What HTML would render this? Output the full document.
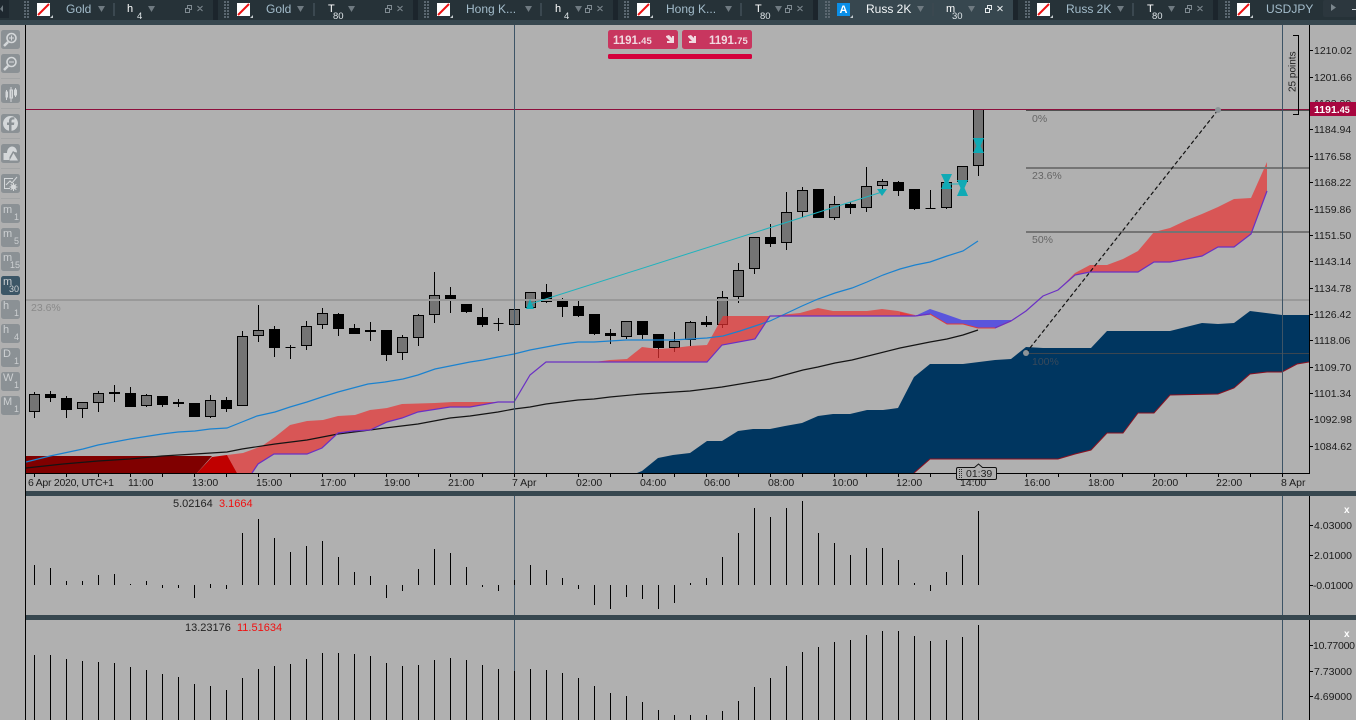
<!DOCTYPE html>
<html><head><meta charset="utf-8"><title>Chart</title>
<style>
html,body{margin:0;padding:0;background:#b0b0b0;width:1356px;height:720px;overflow:hidden}
svg{display:block;position:absolute;left:0;top:0}
text{font-family:"Liberation Sans",sans-serif;font-size:10.5px}
.ax text{fill:#1c1c1c}
.tt{fill:#a3bccb;font-size:12px}
.tf{fill:#fff;font-size:11px}
.ts{fill:#dfe5e8;font-size:9.5px}
.sb{fill:#cdd0d2;font-size:11px}
.ss{fill:#cdd0d2;font-size:9px}
.fb{fill:#8a8a8a;font-size:10.5px}
.lb{font-size:11px}
</style></head><body>
<svg width="1356" height="720" viewBox="0 0 1356 720" xmlns="http://www.w3.org/2000/svg">
<rect width="1356" height="720" fill="#b0b0b0"/>

<!-- clouds: navy -->
<path fill="#003660" d="M637 473L642 471L658 458L673 455L690 453L707 441L722 441L738 431L753 429L770 429L785 426L802 423L818 416L833 414L850 414L867 410L883 410L898 408L914 377L930 364L963 364L995 360L1011 359L1026 347L1043 348L1091 348L1107 331L1170 331L1202 323L1218 324L1234 323L1250 311L1282 315L1309 315V362L1297 364L1282 372L1267 372L1250 374L1234 388L1218 394L1170 395L1154 413L1138 413L1123 433L1107 433L1091 450L1075 454L1058 459L930 459L914 473Z"/>
<path fill="none" stroke="#8a1020" d="M914 473L930 459L1058 459L1075 454L1091 450L1107 433L1123 433L1138 413L1154 413L1170 395L1218 394L1234 388L1250 374L1267 372L1282 372L1297 364L1309 362"/>

<!-- dark red -->
<path fill="#800000" d="M26 456H212L197 473H26Z"/>
<path fill="#c00000" d="M197 473L212 457L227 455L237 473Z"/>

<!-- candles -->
<path fill="none" stroke="#000" d="M34.5 392V418M50.5 391V402M66.5 396V418M82.5 402V418M98.5 391V412M114.5 385V402M130.5 387V406M146.5 394V407M162.5 396V407M178.5 399V407M194.5 403V417M210.5 395V418M226.5 397V412M242.5 331V406M258.5 305V342M274.5 326V357M290.5 345V359M306.5 321V350M322.5 308V329M338.5 313V336M354.5 324V334M370.5 322V341M386.5 330V361M402.5 335V360M418.5 314V346M434.5 272V323M450.5 287V313M466.5 304V313M482.5 308V327M498.5 318V331M514.5 304V325M530.5 292V308M546.5 284V303M562.5 298V317M578.5 301V317M594.5 314V335M610.5 329V344M626.5 321V339M642.5 321V339M658.5 334V358M674.5 332V352M690.5 321V346M706.5 316V327M722.5 291V328M738.5 263V303M754.5 237V274M770.5 224V247M786.5 192V250M802.5 187V217M818.5 189V218M834.5 196V220M850.5 202V214M866.5 167V212M882.5 179V189M898.5 181V196M914.5 189V210M930.5 190V208M946.5 182V209M962.5 166V182M978.5 109V176"/>
<path fill="#000" stroke="#000" d="M45.5 394.5h10v3h-10zM61.5 398.5h10v11h-10zM125.5 393.5h10v13h-10zM109.5 392.5h10v1h-10zM157.5 396.5h10v8h-10zM173.5 402.5h10v1h-10zM189.5 403.5h10v13h-10zM221.5 400.5h10v8h-10zM269.5 329.5h10v18h-10zM285.5 347.5h10v0h-10zM333.5 314.5h10v14h-10zM349.5 328.5h10v5h-10zM381.5 330.5h10v24h-10zM445.5 295.5h10v5h-10zM461.5 304.5h10v7h-10zM477.5 317.5h10v7h-10zM493.5 323.5h10v0h-10zM541.5 292.5h10v9h-10zM557.5 301.5h10v5h-10zM573.5 306.5h10v9h-10zM589.5 314.5h10v19h-10zM605.5 333.5h10v2h-10zM637.5 321.5h10v13h-10zM653.5 334.5h10v13h-10zM701.5 322.5h10v2h-10zM765.5 237.5h10v6h-10zM813.5 189.5h10v28h-10zM845.5 204.5h10v3h-10zM893.5 182.5h10v8h-10zM909.5 189.5h10v19h-10zM925.5 208.5h10v0h-10z"/>
<path fill="#747474" stroke="#000" d="M29.5 394.5h10v17h-10zM77.5 402.5h10v6h-10zM93.5 393.5h10v9h-10zM141.5 395.5h10v10h-10zM205.5 400.5h10v16h-10zM237.5 336.5h10v69h-10zM253.5 330.5h10v5h-10zM301.5 326.5h10v19h-10zM317.5 313.5h10v11h-10zM365.5 330.5h10v1h-10zM397.5 337.5h10v15h-10zM413.5 315.5h10v22h-10zM429.5 295.5h10v19h-10zM509.5 309.5h10v15h-10zM525.5 292.5h10v15h-10zM621.5 321.5h10v15h-10zM669.5 341.5h10v6h-10zM685.5 322.5h10v17h-10zM717.5 297.5h10v27h-10zM733.5 270.5h10v26h-10zM749.5 237.5h10v31h-10zM781.5 212.5h10v30h-10zM797.5 190.5h10v21h-10zM829.5 204.5h10v13h-10zM861.5 186.5h10v21h-10zM877.5 181.5h10v4h-10zM941.5 182.5h10v25h-10zM957.5 166.5h10v15h-10zM973.5 109.5h10v56h-10z"/>

<!-- red cloud with alpha over candles -->
<path fill="#ea3131" fill-opacity=".7" d="M227 455L243 453L262 446L275 437L290 425L307 421L323 420L338 416L355 415L370 410L387 408L402 404L435 403L453 402L498 402L514 402L498 402L470 407L450 407L418 412L402 418L387 422L370 430L353 431L338 433L322 448L307 454L274 454L258 464L252 473H237Z"/>
<path fill="#ea3131" fill-opacity=".7" d="M594 362L610 360L627 359L642 347L658 349L674 348L690 346L707 345L723 316L770 316L800 313L818 308L833 311L867 311L882 309L898 311L915 315L915 316L770 316L755 339L722 345L707 362Z"/>
<path fill="#ea3131" fill-opacity=".7" d="M900 312L915 316L930 314L915 316H900Z"/>
<path fill="#ea3131" fill-opacity=".7" d="M1043 296L1058 290L1075 273L1090 265L1107 265L1123 259L1138 251L1154 232L1170 228L1187 220L1202 214L1218 207L1234 199L1251 198L1267 162V191L1251 234L1234 247L1218 247L1202 256L1170 262L1154 262L1138 272L1090 272L1075 275L1058 290Z"/>
<path fill="#5a55dc" d="M915 316L930 309L945 314L962 320L1011 320V321L995 328L978 328L963 324L947 324L930 314Z"/>
<path fill="none" stroke="#e23a3a" d="M915 316L930 314L947 324L963 324L978 328L995 328L1011 321"/>

<!-- fib lines -->
<path fill="none" stroke="#999" stroke-width="2" d="M26 300H1310"/>
<path fill="none" stroke="#747474" stroke-width="2" d="M1026 168H1310M1026 232H1310"/>
<path fill="none" stroke="#3b4650" d="M1026 353.5H1310"/>
<path fill="none" stroke="#505050" stroke-width="2" d="M1026 110H1310"/>
<path fill="none" stroke="#8c0f3c" d="M26 109.5H1310"/>
<text class="fb" x="31" y="311">23.6%</text>
<g fill="#666">
<text x="1032" y="122" style="fill:#666">0%</text>
<text x="1032" y="179" style="fill:#666">23.6%</text>
<text x="1032" y="243" style="fill:#666">50%</text>
<text x="1032" y="365" style="fill:#37495a">100%</text>
</g>

<!-- indicator lines -->
<path fill="none" stroke="#1b82cf" stroke-width="1.2" d="M26 462L50 456L83 449L98 445L130 439L162 434L178 432L195 431L210 429L227 428L242 422L257 416L275 412L290 407L307 402L322 397L338 392L353 388L368 384L385 382L403 379L418 375L435 369L450 366L470 362L483 360L498 357L514 354L530 350L546 347L562 344L578 342L594 342L610 341L626 340L673 340L707 338L723 336L740 331L755 326L770 321L785 314L802 306L818 299L835 293L852 288L867 282L883 275L900 269L915 265L930 262L947 256L963 251L978 241"/>
<path fill="none" stroke="#141414" stroke-width="1.2" d="M26 468L63 464L98 461L130 459L162 456L195 454L227 452L242 449L275 444L307 440L338 434L370 430L385 428L418 424L450 418L470 416L498 412L514 409L530 407L546 404L578 400L594 399L610 397L642 394L690 391L722 387L770 379L803 370L818 367L835 363L852 360L900 348L930 342L947 339L963 335L978 330"/>
<path fill="none" stroke="#6a30c4" stroke-width="1.2" d="M252 473L258 464L274 454L307 454L322 448L338 433L353 431L370 430L387 422L402 418L418 412L450 407L470 407L498 402L514 402L530 375L546 362L707 362L722 345L755 339L770 316L915 316L930 314"/>
<path fill="none" stroke="#6a30c4" stroke-width="1.2" d="M995 328L1011 321L1026 311L1043 296L1058 290L1075 275L1090 272L1138 272L1154 262L1170 262L1202 256L1218 247L1234 247L1251 234L1267 191"/>

<!-- teal arrows -->
<path fill="none" stroke="#1fb2bd" d="M530 304L882 192M946 184H962"/>
<path fill="#10aab5" d="M530 299L534 309H526ZM882 196L877 189H887ZM973 138H984L980.500 146L984 153H973L976.500 146ZM941 174H952L948.500 181.500L952 189H941L944.500 181.500ZM957 180H968L964.500 188L968 196H957L960.500 188Z"/>

<!-- dashed trend -->
<path fill="none" stroke="#111" stroke-width="1.2" stroke-dasharray="4 2.500" d="M1026 353L1218 110"/>
<circle cx="1026" cy="353" r="3" fill="#8d9498"/>
<circle cx="1218" cy="110" r="3" fill="#8d9498"/>

<!-- vertical cursors -->
<path fill="none" stroke="#3d5466" d="M514.500 25V473M1282.500 25V473M514.500 496V615M1282.500 496V615M1282.500 620V720M514.500 620V720"/>

<!-- axes -->
<path fill="none" stroke="#000" d="M25.500 25V720M1309.500 25V473M26 473.500H1310M1309.500 496V615M1309.500 620V720"/>
<path fill="none" stroke="#000" d="M1310 50.500h3M1310 77.500h3M1310 129.500h3M1310 156.500h3M1310 182.500h3M1310 209.500h3M1310 235.500h3M1310 261.500h3M1310 288.500h3M1310 314.500h3M1310 340.500h3M1310 367.500h3M1310 393.500h3M1310 419.500h3M1310 446.500h3M1310 525.500h3M1310 555.500h3M1310 585.500h3M1310 645.500h3M1310 671.500h3M1310 696.500h3M34.500 474v3M66.500 474v3M98.500 474v3M130.500 474v3M162.500 474v3M194.500 474v3M226.500 474v3M258.500 474v3M290.500 474v3M322.500 474v3M354.500 474v3M386.500 474v3M418.500 474v3M450.500 474v3M482.500 474v3M514.500 474v3M546.500 474v3M578.500 474v3M610.500 474v3M642.500 474v3M674.500 474v3M706.500 474v3M738.500 474v3M770.500 474v3M802.500 474v3M834.500 474v3M866.500 474v3M898.500 474v3M930.500 474v3M962.500 474v3M994.500 474v3M1026.500 474v3M1058.500 474v3M1090.500 474v3M1122.500 474v3M1154.500 474v3M1186.500 474v3M1218.500 474v3M1250.500 474v3M1282.500 474v3"/>
<g class="ax">
<text x="1314" y="54">1210.02</text><text x="1314" y="81">1201.66</text><text x="1314" y="107">1193.30</text><text x="1314" y="133">1184.94</text><text x="1314" y="160">1176.58</text><text x="1314" y="186">1168.22</text><text x="1314" y="213">1159.86</text><text x="1314" y="239">1151.50</text><text x="1314" y="265">1143.14</text><text x="1314" y="292">1134.78</text><text x="1314" y="318">1126.42</text><text x="1314" y="344">1118.06</text><text x="1314" y="371">1109.70</text><text x="1314" y="397">1101.34</text><text x="1314" y="423">1092.98</text><text x="1314" y="450">1084.62</text>
<text x="1314" y="529" textLength="38">4.03000</text><text x="1314" y="559" textLength="38">2.01000</text><text x="1313" y="589" textLength="40">-0.01000</text><text x="1313" y="649" textLength="42">10.77000</text><text x="1314" y="675" textLength="38">7.73000</text><text x="1314" y="700" textLength="38">4.69000</text>
<text x="28" y="486" textLength="86">6 Apr 2020, UTC+1</text><text x="128" y="486">11:00</text><text x="192" y="486">13:00</text><text x="256" y="486">15:00</text><text x="320" y="486">17:00</text><text x="384" y="486">19:00</text><text x="448" y="486">21:00</text><text x="512" y="486">7 Apr</text><text x="576" y="486">02:00</text><text x="640" y="486">04:00</text><text x="704" y="486">06:00</text><text x="768" y="486">08:00</text><text x="832" y="486">10:00</text><text x="896" y="486">12:00</text><text x="960" y="486">14:00</text><text x="1024" y="486">16:00</text><text x="1088" y="486">18:00</text><text x="1152" y="486">20:00</text><text x="1216" y="486">22:00</text><text x="1281" y="486">8 Apr</text>
</g>

<!-- price tag -->
<rect x="1310" y="102" width="46" height="14" fill="#a8063f"/>
<text x="1314" y="113" style="fill:#fff;font-weight:bold;font-size:10.5px">1191.<tspan style="font-size:9px">45</tspan></text>

<!-- measure bracket -->
<path fill="none" stroke="#000" d="M1293 35.500H1298.500V114.500H1293"/>
<text transform="translate(1295.500 92) rotate(-90)" style="fill:#222;font-size:10px">25 points</text>

<!-- countdown -->
<path fill="#b0b0b0" stroke="#111" d="M958 467.500H974.500L978.500 464L982.500 467.500H995Q996.500 467.500 996.500 469V478Q996.500 479.500 995 479.500H958Q956.500 479.500 956.500 478V469Q956.500 467.500 958 467.500Z"/>
<path stroke="#333" stroke-dasharray="1 1" d="M959.500 469V478M961.500 469V478"/>
<text x="966" y="477" style="fill:#222;font-size:10.5px">01:39</text>

<!-- order panel -->
<rect x="608" y="30" width="70" height="19" rx="2.500" fill="#c8365f"/>
<rect x="682" y="30" width="70" height="19" rx="2.500" fill="#c8365f"/>
<rect x="608" y="54" width="144" height="5" rx="1.500" fill="#d4003c"/>
<text x="613" y="44" style="fill:#f1d9e0;font-weight:bold;font-size:11.500px">1191.<tspan style="font-size:9.500px">45</tspan></text>
<text x="709" y="44" style="fill:#f1d9e0;font-weight:bold;font-size:11.500px">1191.<tspan style="font-size:9.500px">75</tspan></text>
<path fill="#f1d9e0" d="M666 36L669 35L672 38V36H674V43H667V41H670L666 37ZM688 36L691 35L694 38V36H696V43H689V41H692L688 37Z"/>

<!-- panel dividers -->
<rect y="491" x="26" width="1330" height="5" fill="#37474f"/>
<rect y="615" x="26" width="1330" height="5" fill="#37474f"/>

<!-- histogram 1 -->
<path fill="none" stroke="#000" d="M34.500 565V585M50.500 568V585M66.500 581V585M82.500 581V585M98.500 575V585M114.500 574V585M130.500 584V585M146.500 581V585M162.500 585V588M178.500 585V588M194.500 585V598M210.500 584V588M226.500 585V589M242.500 533V585M258.500 519V585M274.500 538V585M290.500 552V585M306.500 546V585M322.500 541V585M338.500 557V585M354.500 572V585M370.500 576V585M386.500 585V598M402.500 585V591M418.500 569V585M434.500 549V585M450.500 553V585M466.500 567V585M482.500 585V587M498.500 585V591M514.500 580V585M530.500 565V585M546.500 570V585M562.500 578V585M578.500 585V589M594.500 585V605M610.500 585V609M626.500 585V597M642.500 585V599M658.500 585V609M674.500 585V603M690.500 583V585M706.500 578V585M722.500 557V585M738.500 533V585M754.500 508V585M770.500 517V585M786.500 508V585M802.500 501V585M818.500 533V585M834.500 543V585M850.500 555V585M866.500 548V585M882.500 548V585M898.500 560V585M914.500 583V585M930.500 585V591M946.500 572V585M962.500 555V585M978.500 511V585"/>
<text class="lb" x="173" y="507" style="fill:#222">5.02164</text>
<text class="lb" x="219" y="507" style="fill:#f01010">3.1664</text>
<text x="1344" y="513" style="fill:#fff;font-weight:bold;font-size:10px">x</text>

<!-- histogram 2 -->
<path fill="none" stroke="#000" d="M34.500 655V720M50.500 655V720M66.500 659V720M82.500 661V720M98.500 662V720M114.500 663V720M130.500 667V720M146.500 670V720M162.500 674V720M178.500 677V720M194.500 684V720M210.500 686V720M226.500 690V720M242.500 678V720M258.500 669V720M274.500 666V720M290.500 664V720M306.500 659V720M322.500 653V720M338.500 653V720M354.500 654V720M370.500 656V720M386.500 663V720M402.500 666V720M418.500 665V720M434.500 660V720M450.500 658V720M466.500 660V720M482.500 665V720M498.500 669V720M514.500 671V720M530.500 669V720M546.500 670V720M562.500 673V720M578.500 678V720M594.500 686V720M610.500 693V720M626.500 696V720M642.500 702V720M658.500 710V720M674.500 715V720M690.500 715V720M706.500 715V720M722.500 711V720M738.500 701V720M754.500 687V720M770.500 678V720M786.500 666V720M802.500 652V720M818.500 647V720M834.500 642V720M850.500 640V720M866.500 635V720M882.500 631V720M898.500 631V720M914.500 636V720M930.500 641V720M946.500 640V720M962.500 637V720M978.500 625V720"/>
<text class="lb" x="185" y="631" style="fill:#222">13.23176</text>
<text class="lb" x="237" y="631" style="fill:#f01010">11.51634</text>
<text x="1344" y="637" style="fill:#fff;font-weight:bold;font-size:10px">x</text>

<!-- top bar -->
<rect x="0" y="0" width="1356" height="20" fill="#263238"/>
<rect x="0" y="20" width="1356" height="5" fill="#37474f"/>
<rect x="0" y="0" width="9" height="18" fill="#1e282f"/>
<path fill="#6f7a81" d="M0 9L3 5V12Z"/>
<rect x="213" y="0" width="5" height="20" fill="#1c252c"/>
<rect x="413" y="0" width="5" height="20" fill="#1c252c"/>
<rect x="613" y="0" width="5" height="20" fill="#1c252c"/>
<rect x="813" y="0" width="5" height="20" fill="#1c252c"/>
<rect x="818" y="0" width="195" height="20" fill="#37474f"/>
<rect x="1013" y="0" width="5" height="20" fill="#1c252c"/>
<rect x="1213" y="0" width="5" height="20" fill="#1c252c"/>
<rect x="1323" y="0" width="33" height="17" rx="2" fill="#2c373e"/>
<path fill="#7b868d" d="M1331 4L1336 7.500L1331 11Z"/>
<path stroke="#cfd6da" d="M1352 9.500H1356"/>

<!-- grippers -->
<path fill="none" stroke="#5a6770" stroke-width="2" stroke-dasharray="2 1" d="M25 1V19M28 1V19M225 1V19M228 1V19M425 1V19M428 1V19M625 1V19M628 1V19M826 1V19M829 1V19M1026 1V19M1029 1V19M1226 1V19M1229 1V19"/>

<!-- tab icons -->
<g fill="#fff">
<rect x="37" y="3" width="13" height="13"/><rect x="237" y="3" width="13" height="13"/><rect x="437" y="3" width="13" height="13"/><rect x="637" y="3" width="13" height="13"/><rect x="1037" y="3" width="13" height="13"/><rect x="1237" y="3" width="13" height="13"/>
</g>
<rect x="837" y="3" width="13" height="13" fill="#0a8fe8"/>
<text x="839.500" y="13" style="fill:#fff;font-weight:bold;font-size:11px">A</text>
<path fill="none" stroke="#ee1111" stroke-width="2" d="M38 15L49 4M238 15L249 4M438 15L449 4M638 15L649 4M1038 15L1049 4M1238 15L1249 4"/>
<path fill="#c5ccd0" d="M50 18h3v-3ZM250 18h3v-3ZM450 18h3v-3ZM650 18h3v-3ZM850 18h3v-3ZM1050 18h3v-3ZM1250 18h3v-3Z"/>

<!-- tab text -->
<text class="tt" x="66" y="13">Gold</text>
<text class="tt" x="266" y="13">Gold</text>
<text class="tt" x="466" y="13">Hong K...</text>
<text class="tt" x="666" y="13">Hong K...</text>
<text class="tt" x="866" y="13" style="fill:#f2f6f8">Russ 2K</text>
<text class="tt" x="1066" y="13">Russ 2K</text>
<text class="tt" x="1266" y="13">USDJPY</text>

<text class="tf" x="127" y="12">h</text><text class="ts" x="137" y="19">4</text>
<text class="tf" x="328" y="12">T</text><text class="ts" x="333" y="19">80</text>
<text class="tf" x="555" y="12">h</text><text class="ts" x="564" y="19">4</text>
<text class="tf" x="755" y="12">T</text><text class="ts" x="760" y="19">80</text>
<text class="tf" x="946" y="12">m</text><text class="ts" x="952" y="19">30</text>
<text class="tf" x="1147" y="12">T</text><text class="ts" x="1152" y="19">80</text>

<!-- dropdown arrows -->
<path fill="#6f7a81" d="M98 6H105L101.500 12ZM148 6H155L151.500 12ZM297 6H304L300.500 12ZM348 6H355L351.500 12ZM525 6H532L528.500 12ZM575 6H582L578.500 12ZM725 6H732L728.500 12ZM775 6H782L778.500 12ZM917 6H924L920.500 12ZM968 6H975L971.500 12ZM1117 6H1124L1120.500 12ZM1168 6H1175L1171.500 12Z"/>
<!-- separators -->
<path stroke="#3b4850" stroke-width="2" d="M114 3V16M314 3V16M541 3V16M741 3V16M933 3V16M1133 3V16"/>

<!-- restore + close -->
<g fill="none" stroke="#7f8a91">
<path d="M185.500 8.500h4v4h-4zM187.500 8V5.500h4v4H190M385.500 8.500h4v4h-4zM387.500 8V5.500h4v4H390M585.500 8.500h4v4h-4zM587.500 8V5.500h4v4H590M785.500 8.500h4v4h-4zM787.500 8V5.500h4v4H790M1185.500 8.500h4v4h-4zM1187.500 8V5.500h4v4H1190"/>
<path d="M197.500 6L202.500 11M202.500 6L197.500 11M397.500 6L402.500 11M402.500 6L397.500 11M597.500 6L602.500 11M602.500 6L597.500 11M797.500 6L802.500 11M802.500 6L797.500 11M1197.500 6L1202.500 11M1202.500 6L1197.500 11"/>
</g>
<g fill="none" stroke="#e5eaec">
<path d="M985.500 8.500h4v4h-4zM987.500 8V5.500h4v4H990"/>
<path d="M997.500 6L1002.500 11M1002.500 6L997.500 11"/>
</g>

<!-- sidebar -->
<g fill="#8b9195">
<rect x="1" y="30" width="19" height="19" rx="2.500"/><rect x="1" y="54" width="19" height="19" rx="2.500"/><rect x="1" y="84" width="19" height="19" rx="2.500"/><rect x="1" y="114" width="19" height="19" rx="2.500"/><rect x="1" y="144" width="19" height="19" rx="2.500"/><rect x="1" y="174" width="19" height="19" rx="2.500"/><rect x="1" y="204" width="19" height="19" rx="2.500"/><rect x="1" y="228" width="19" height="19" rx="2.500"/><rect x="1" y="252" width="19" height="19" rx="2.500"/><rect x="1" y="300" width="19" height="19" rx="2.500"/><rect x="1" y="324" width="19" height="19" rx="2.500"/><rect x="1" y="348" width="19" height="19" rx="2.500"/><rect x="1" y="372" width="19" height="19" rx="2.500"/><rect x="1" y="396" width="19" height="19" rx="2.500"/>
</g>
<rect x="1" y="276" width="19" height="19" rx="2.500" fill="#3c5666"/>
<path stroke="#a3a5a6" d="M1 78.500H20M1 108.500H20M1 138.500H20M1 168.500H20M1 198.500H20"/>

<!-- magnifiers -->
<g fill="none" stroke="#d5d8da">
<circle cx="11.500" cy="38" r="4.500" stroke-width="1.600"/><path stroke-width="2.500" d="M8 42L4 46"/><path d="M9 38h5M11.500 35.500v5"/>
<circle cx="11.500" cy="62" r="4.500" stroke-width="1.600"/><path stroke-width="2.500" d="M8 66L4 70"/><path d="M9 62h5"/>
</g>
<!-- candles icon -->
<path fill="none" stroke="#d5d8da" d="M6.500 90V100M6 92h1.500v5H6zM11 87V102M10 90h2.500v8H10zM15.500 88V97M14.500 90h2v5h-2z"/>
<!-- facebook -->
<circle cx="10.500" cy="123.500" r="7.500" fill="#d5d8da"/>
<path fill="#8b9195" d="M11.500 131.500V125H14L14.300 122.500H11.500V121C11.500 120 12 119.500 13 119.500H14.400V117.300C13.900 117.200 13.300 117.200 12.700 117.200C10.500 117.200 9 118.500 9 120.800V122.500H7V125H9V131.500Z"/>
<!-- shapes -->
<path fill="#d5d8da" d="M3.500 160V153H7C7 149 9.500 146.500 12 146.500C15 146.500 17 149 17 152.500L14.500 152L13 151L9.500 157V160Z"/>
<path fill="#d5d8da" d="M13.500 153L18 160.500H9.500Z"/>
<!-- settings -->
<g fill="none" stroke="#d5d8da">
<path d="M10 188.500H4.500V178.500H13M6 185L10 181L12 183L17 177"/>
<circle cx="13.500" cy="187" r="2.500" fill="#d5d8da" stroke="none"/>
<circle cx="13.500" cy="187" r="1" fill="#8b9195" stroke="none"/>
<path d="M13.500 183v8M9.500 187h8M10.700 184.200l5.600 5.600M16.300 184.200l-5.600 5.600" stroke-width="1"/>
</g>

<text class="sb" x="3" y="213">m</text><text class="ss" x="14" y="220">1</text>
<text class="sb" x="3" y="237">m</text><text class="ss" x="14" y="244">5</text>
<text class="sb" x="3" y="261">m</text><text class="ss" x="10" y="268">15</text>
<text class="sb" x="3" y="285">m</text><text class="ss" x="9" y="292">30</text>
<text class="sb" x="3" y="309">h</text><text class="ss" x="14" y="316">1</text>
<text class="sb" x="3" y="333">h</text><text class="ss" x="14" y="340">4</text>
<text class="sb" x="3" y="357">D</text><text class="ss" x="14" y="364">1</text>
<text class="sb" x="3" y="381">W</text><text class="ss" x="14" y="388">1</text>
<text class="sb" x="3" y="405">M</text><text class="ss" x="14" y="412">1</text>
</svg>
</body></html>
